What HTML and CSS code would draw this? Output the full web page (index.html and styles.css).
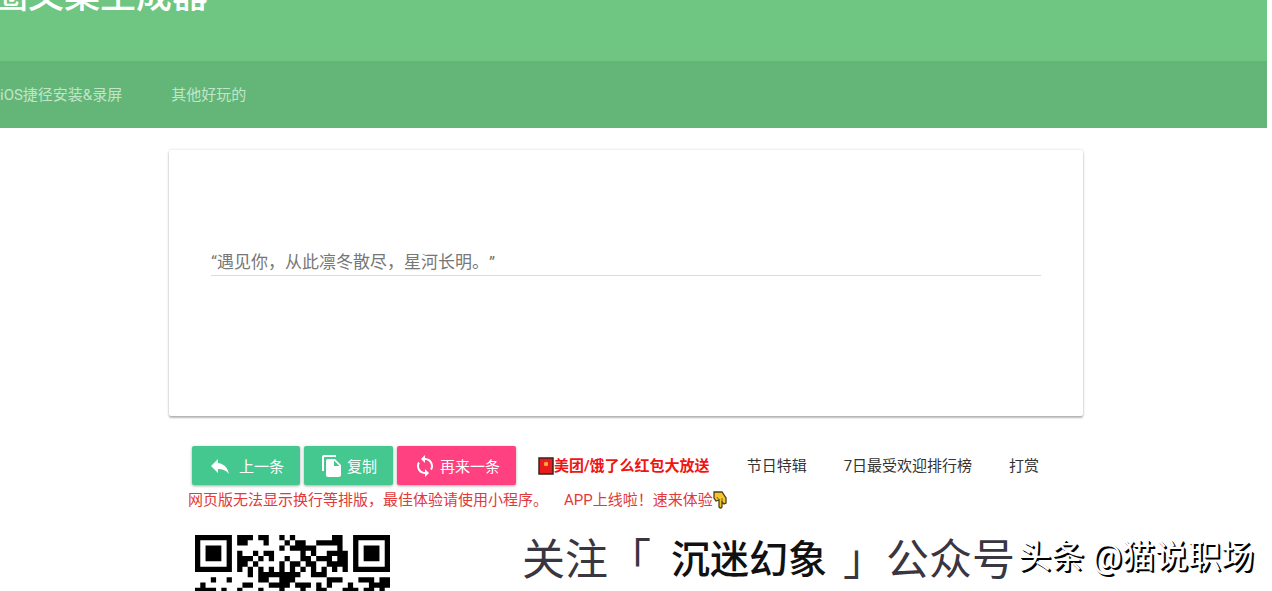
FILE: index.html
```
<!DOCTYPE html>
<html lang="zh-CN">
<head>
  <meta charset="UTF-8">
  <meta name="viewport" content="width=device-width, initial-scale=1.0">
  <title>圈文案生成器</title>
  <link rel="stylesheet" href="styles.css">
</head>
<body>
  <header class="header">
    <h1 class="title">圈文案生成器</h1>
  </header>
  <nav class="tabs">
    <a href="#ios">iOS捷径安装&amp;录屏</a>
    <a href="#more">其他好玩的</a>
  </nav>

  <main class="container">
    <div class="card">
      <input type="text" class="quote" id="quote" aria-label="文案" value="“遇见你，从此凛冬散尽，星河长明。”">
    </div>

    <div class="toolbar">
      <div class="buttons">
        <button type="button" class="btn btn-prev">
          <svg viewBox="0 0 24 24"><path d="M10 9V5l-7 7 7 7v-4.100c5 0 8.500 1.600 11 5.100-1-5-4-10-11-11z"/></svg>
          <span>上一条</span>
        </button>
        <button type="button" class="btn">
          <svg viewBox="0 0 24 24"><path d="M16 1H4c-1.100 0-2 .9-2 2v14h2V3h12V1zm-1 4l6 6v10c0 1.100-.9 2-2 2H7.990C6.890 23 6 22.100 6 21l.01-14c0-1.100.89-2 1.990-2h7zm-1 7h5.500L14 6.500V12z"/></svg>
          <span>复制</span>
        </button>
        <button type="button" class="btn btn-pink">
          <svg viewBox="0 0 24 24"><path d="M12 4V1L8 5l4 4V6c3.310 0 6 2.690 6 6 0 1.010-.25 1.970-.7 2.800l1.460 1.460C19.540 15.030 20 13.570 20 12c0-4.420-3.580-8-8-8zm0 14c-3.310 0-6-2.690-6-6 0-1.010.25-1.970.7-2.800L5.240 7.740C4.460 8.970 4 10.430 4 12c0 4.420 3.580 8 8 8v3l4-4-4-4v3z"/></svg>
          <span>再来一条</span>
        </button>
      </div>
      <div class="links">
        <a href="#hongbao" class="hot">
          <svg class="packet" viewBox="0 0 16 18">
            <rect x="1" y="1" width="14" height="16" fill="#e81c1c" stroke="#3c2222" stroke-width="1.500"/>
            <circle cx="8" cy="7" r="2.200" fill="#ffa53c"/>
          </svg>美团/饿了么红包大放送</a>
        <a href="#festival">节日特辑</a>
        <a href="#rank">7日最受欢迎排行榜</a>
        <a href="#reward">打赏</a>
      </div>
    </div>

    <p class="notice">
      <span>网页版无法显示换行等排版，最佳体验请使用小程序。</span>
      <a href="#app">APP上线啦！速来体验<svg class="finger" viewBox="0 0 14 18"><path d="M1 1h8l4 6v5l-2 1-2-2v5q-1 2-3 0v-7l-3 1-2-3z" fill="#f5c52c" stroke="#4b4018" stroke-width="1.300"/><path d="M4 6l2 3M9 7v4" stroke="#7b6415" fill="none"/></svg></a>
    </p>

    <section class="promo">
      <svg class="qrcode" viewBox="0 0 37 11">
        <!-- 定位点 -->
        <path fill-rule="evenodd" d="M0 0h7v7h-7zM1 1v5h5v-5zM2 2h3v3h-3zM30 0h7v7h-7zM31 1v5h5v-5zM32 2h3v3h-3z"/>
        <!-- 数据 -->
        <path d="M8 0h3v1h-3zM12 0h2v1h-2zM16 0h1v1h-1zM18 0h1v1h-1zM26 0h2v1h-2z
          M8 1h2v1h-2zM13 1h1v1h-1zM17 1h1v1h-1zM19 1h2v1h-2zM23 1h5v1h-5z
          M16 2h1v1h-1zM18 2h5v1h-5zM27 2h1v1h-1z
          M8 3h1v1h-1zM11 3h1v1h-1zM13 3h2v1h-2zM20 3h1v1h-1zM22 3h1v1h-1zM25 3h4v1h-4z
          M8 4h3v1h-3zM12 4h1v1h-1zM14 4h1v1h-1zM17 4h1v1h-1zM20 4h2v1h-2zM23 4h3v1h-3zM27 4h2v1h-2z
          M8 5h2v1h-2zM11 5h1v1h-1zM16 5h1v1h-1zM18 5h2v1h-2zM21 5h2v1h-2zM25 5h4v1h-4z
          M8 6h1v1h-1zM10 6h1v1h-1zM12 6h1v1h-1zM14 6h1v1h-1zM16 6h1v1h-1zM18 6h1v1h-1zM20 6h1v1h-1zM22 6h1v1h-1zM24 6h1v1h-1zM26 6h1v1h-1zM28 6h1v1h-1z
          M10 7h1v1h-1zM12 7h8v1h-8zM22 7h3v1h-3z
          M3 8h1v1h-1zM6 8h1v1h-1zM12 8h2v1h-2zM16 8h3v1h-3zM25 8h3v1h-3zM31 8h3v1h-3zM35 8h2v1h-2z
          M1 9h1v1h-1zM9 9h2v1h-2zM14 9h4v1h-4zM19 9h3v1h-3zM23 9h1v1h-1zM25 9h1v1h-1zM29 9h1v1h-1zM33 9h4v1h-4z
          M0 10h4v1h-4zM5 10h1v1h-1zM8 10h1v1h-1zM12 10h1v1h-1zM16 10h1v1h-1zM20 10h1v1h-1zM23 10h2v1h-2zM28 10h3v1h-3zM32 10h2v1h-2zM35 10h1v1h-1z"/>
      </svg>
      <p class="follow">
        <span>关注</span>
        <span>「</span>
        <strong>沉迷幻象</strong>
        <span>」</span>
        <span>公众号</span>
      </p>
    </section>
  </main>

  <div class="watermark">头条 @猫说职场</div>
</body>
</html>
```
FILE: styles.css
```
* {
  box-sizing: border-box;
}
body {
  margin: 0 5px 0 0;
  background-color: #fff;
  color: #333;
  font-family: Roboto, "Noto Sans CJK SC", sans-serif;
  font-size: 15px;
  line-height: 20px;
  overflow: hidden;
}
a {
  color: inherit;
  text-decoration: none;
}
.header {
  display: flow-root;
  height: 61px;
  background-color: #6ec682;
}
.title {
  margin: -30px 0 0 -8px;
  color: #fff;
  font-size: 36px;
  font-weight: 500;
  line-height: 52px;
}
.tabs {
  display: flex;
  gap: 49px;
  height: 67px;
  align-items: center;
  background-color: #64b578;
  color: #c0e6c8;
}
.container {
  padding: 22px 184px 0 169px;
}
.card {
  padding: 96px 42px 140px;
  background-color: #fff;
  border-radius: 2px;
  box-shadow: 0 2px 2px rgba(0, 0, 0, 0.26), 0 0 3px rgba(0, 0, 0, 0.16);
}
.quote {
  display: block;
  width: 100%;
  height: 30px;
  padding: 0;
  border: none;
  border-bottom: 1px solid #dcdcdc;
  background: none;
  color: #777;
  font-family: inherit;
  font-size: 17px;
  text-spacing-trim: space-all;
  outline: none;
}
.toolbar {
  display: flex;
  align-items: center;
  gap: 22px;
  padding: 30px 0 0 23px;
  white-space: nowrap;
}
.buttons {
  display: flex;
  gap: 4px;
}
.btn {
  display: flex;
  align-items: center;
  gap: 3px;
  height: 39px;
  padding: 0 16px;
  border: none;
  border-radius: 2px;
  background-color: #45c790;
  box-shadow: 0 1px 3px rgba(0, 0, 0, 0.35);
  color: #fff;
  font-family: inherit;
  font-size: 15px;
  cursor: pointer;
}
.btn svg {
  width: 24px;
  height: 24px;
  fill: #fff;
}
.btn-prev {
  gap: 7px;
}
.btn-pink {
  background-color: #ff4081;
}
.links {
  display: flex;
  gap: 37px;
}
.hot {
  display: flex;
  align-items: center;
  color: #f01414;
  font-weight: 700;
}
.packet {
  width: 16px;
  height: 18px;
}
.notice {
  display: flex;
  gap: 16px;
  margin: 5px 0 0;
  padding-left: 19px;
  color: #e03a3a;
  white-space: nowrap;
}
.notice a {
  display: flex;
  align-items: center;
}
.finger {
  width: 14px;
  height: 18px;
}
.promo {
  display: flex;
  align-items: flex-start;
  gap: 132px;
  padding: 25px 0 0 26px;
  white-space: nowrap;
}
.qrcode {
  flex: none;
  width: 195px;
  height: 58px;
}
.follow {
  display: flex;
  align-items: center;
  margin: 0;
  color: #39363f;
  font-size: 43px;
  line-height: 50px;
}
.follow strong {
  margin: 0 16px 0 20px;
  color: #111;
  font-size: 39px;
  font-weight: 500;
}
.watermark {
  position: absolute;
  right: 18px;
  bottom: 10px;
  color: #fff;
  font-size: 33px;
  line-height: 48px;
  text-shadow: 1px 1px 0 #000, 2px 2px 0 #000;
}
```
